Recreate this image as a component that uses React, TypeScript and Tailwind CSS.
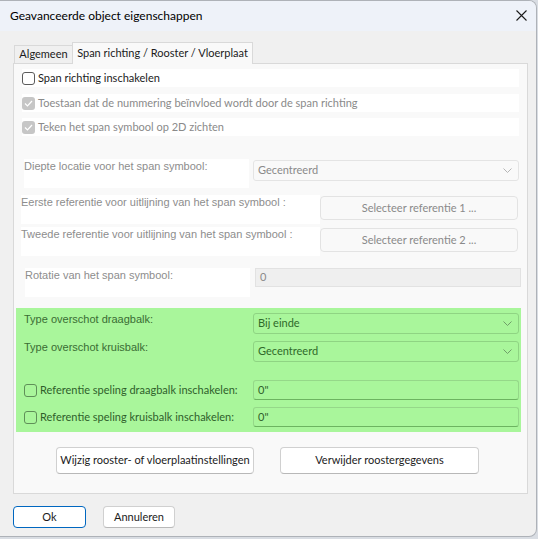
import React from "react";

const title = "font-['Lato','Noto_Sans',sans-serif] text-[12px]";
const ui = "font-['Lato','Noto_Sans',sans-serif] text-[11px] whitespace-nowrap";
const classic = "font-['Liberation_Sans',sans-serif] text-[11px] leading-[13px] whitespace-nowrap";

function Chevron({ className }: { className?: string }) {
  return (
    <svg width="9" height="5" viewBox="0 0 9 5" className={className}>
      <path d="M0.5 0.5 L4.5 4.5 L8.5 0.5" fill="none" stroke="currentColor" strokeWidth="1" />
    </svg>
  );
}

type BoxState = "off" | "disabledOn" | "greenOff";

function Checkbox({ state }: { state: BoxState }) {
  if (state === "disabledOn") {
    return (
      <span className="flex h-[13px] w-[13px] shrink-0 items-center justify-center rounded-[3px] bg-[#c6c6c6]">
        <svg width="9" height="7" viewBox="0 0 9 7">
          <path d="M1 3.5 L3.5 6 L8 1" fill="none" stroke="#ffffff" strokeWidth="1.2" />
        </svg>
      </span>
    );
  }
  if (state === "greenOff") {
    return <span className="h-[13px] w-[13px] shrink-0 rounded-[3px] border border-[#5f8f58] bg-[#a9f69b]" />;
  }
  return <span className="h-[13px] w-[13px] shrink-0 rounded-[3px] border border-[#5b5b5b] bg-white" />;
}

function CheckRow({ label, state, className }: { label: string; state: BoxState; className?: string }) {
  const disabled = state === "disabledOn";
  return (
    <div className={`ml-[8px] flex h-[18px] w-[497px] items-center gap-[3px] bg-white ${className ?? ""}`}>
      <Checkbox state={state} />
      <span className={`${ui} ${disabled ? "text-[#8a8a8a]" : "text-[#1b1b1b]"}`}>{label}</span>
    </div>
  );
}

function Combo({ value, green }: { value: string; green?: boolean }) {
  return (
    <div
      className={`flex h-[21px] w-[266px] items-center justify-between rounded-[3px] border pl-[4px] pr-[6px] ${ui} ${
        green
          ? "border-[#8fd483] bg-[#a9f69b] text-[#2f6a2a]"
          : "border-[#e4e4e4] bg-[#f9f9f9] text-[#8a8a8a]"
      }`}
    >
      <span>{value}</span>
      <Chevron className={green ? "text-[#6f9f68]" : "text-[#b5b5b5]"} />
    </div>
  );
}

function LabelBox({ text, className }: { text: string; className: string }) {
  return <div className={`h-[29px] shrink-0 bg-white pt-[1px] text-[#8d8d8d] ${classic} ${className}`}>{text}</div>;
}

function RefButton({ text }: { text: string }) {
  return (
    <div
      className={`mt-[1px] flex h-[24px] w-[198px] items-center justify-center rounded-[4px] border border-[#e3e3e3] bg-[#f9f9f9] text-[#8a8a8a] ${ui}`}
    >
      {text}
    </div>
  );
}

function GreenInput({ label }: { label: string }) {
  return (
    <div className="flex h-[20px] items-center">
      <div className="flex w-[237px] items-center gap-[3px] pl-[8px]">
        <Checkbox state="greenOff" />
        <span className={`${ui} text-[#2f5f2b]`}>{label}</span>
      </div>
      <div
        className={`flex h-[20px] w-[266px] items-center rounded-[3px] border border-[#95d889] border-b-[#6cb460] bg-[#a9f69b] pl-[4px] text-[#2f5f2b] ${ui}`}
      >
        0"
      </div>
    </div>
  );
}

function DialogButton({ text, className }: { text: string; className: string }) {
  return (
    <div
      className={`flex items-center justify-center rounded-[4px] border border-[#d0d0d0] border-b-[#b8b8b8] bg-white text-[#1b1b1b] ${ui} ${className}`}
    >
      {text}
    </div>
  );
}

export default function App() {
  return (
    <div className="h-[539px] w-[538px] bg-[#d9dde3]">
      <div className="flex h-[537px] w-[537px] flex-col overflow-hidden rounded-tr-[8px] rounded-br-[8px] border-t border-r border-b border-[#aeb2b8] bg-[#f0f0f0]">
        {/* title bar */}
        <div className="flex h-[30px] shrink-0 items-center justify-between bg-[#eef2f9] pl-[10px] pr-[9px]">
          <span className={`${title} text-black`}>Geavanceerde object eigenschappen</span>
          <svg width="11" height="11" viewBox="0 0 11 11" className="mt-[-2px]">
            <path d="M0.5 0.5 L10.5 10.5 M10.5 0.5 L0.5 10.5" stroke="#1b1b1b" strokeWidth="1.1" />
          </svg>
        </div>

        <div className="flex flex-col pl-[13px] pt-[11px]">
          {/* tabs */}
          <div className="relative z-10 flex h-[21px] items-end">
            <div className={`ml-[1px] flex h-[18px] w-[58px] items-center justify-center border-t border-l border-[#d9d9d9] bg-[#f0f0f0] text-[#1b1b1b] ${ui}`}>
              Algemeen
            </div>
            <div className={`mb-[-1px] flex h-[22px] w-[181px] items-center justify-center border-t border-r border-l border-[#d9d9d9] bg-[#f9f9f9] text-[#1b1b1b] ${ui}`}>
              Span richting / Rooster / Vloerplaat
            </div>
          </div>

          {/* tab page */}
          <div className="flex h-[431px] w-[515px] flex-col border border-[#d9d9d9] bg-[#f9f9f9]">
            <CheckRow className="mt-[5px]" state="off" label="Span richting inschakelen" />
            <CheckRow className="mt-[7px]" state="disabledOn" label="Toestaan dat de nummering beïnvloed wordt door de span richting" />
            <CheckRow className="mt-[6px]" state="disabledOn" label="Teken het span symbool op 2D zichten" />

            <div className="mt-[23px] flex items-start">
              <LabelBox className="ml-[10px] w-[225px]" text="Diepte locatie voor het span symbool:" />
              <div className="ml-[4px] mt-[1px]">
                <Combo value="Gecentreerd" />
              </div>
            </div>

            <div className="mt-[7px] flex items-start">
              <LabelBox className="ml-[7px] w-[299px]" text="Eerste referentie voor uitlijning van het span symbool :" />
              <RefButton text="Selecteer referentie 1 ..." />
            </div>

            <div className="mt-[3px] flex items-start">
              <LabelBox className="ml-[7px] w-[299px]" text="Tweede referentie voor uitlijning van het span symbool :" />
              <RefButton text="Selecteer referentie 2 ..." />
            </div>

            <div className="mt-[12px] flex items-start">
              <LabelBox className="ml-[11px] w-[225px]" text="Rotatie van het span symbool:" />
              <div className={`ml-[5px] flex h-[19px] w-[266px] items-center border border-[#e2e2e2] bg-[#efefef] pl-[4px] text-[#8a8a8a] ${ui}`}>
                0
              </div>
            </div>

            {/* overhang settings */}
            <div className="ml-[2px] mt-[11px] flex h-[124px] w-[505px] flex-col bg-[#a9f69b] pt-[5px]">
              <div className="flex h-[21px] items-start">
                <span className={`w-[237px] pl-[8px] text-[#3a6d34] ${classic}`}>Type overschot draagbalk:</span>
                <Combo value="Bij einde" green />
              </div>
              <div className="mt-[7px] flex h-[21px] items-start">
                <span className={`w-[237px] pl-[8px] text-[#3a6d34] ${classic}`}>Type overschot kruisbalk:</span>
                <Combo value="Gecentreerd" green />
              </div>
              <div className="mt-[18px]">
                <GreenInput label="Referentie speling draagbalk inschakelen:" />
              </div>
              <div className="mt-[7px]">
                <GreenInput label="Referentie speling kruisbalk inschakelen:" />
              </div>
            </div>

            <div className="mt-[15px] flex">
              <DialogButton className="ml-[42px] h-[27px] w-[198px]" text="Wijzig rooster- of vloerplaatinstellingen" />
              <DialogButton className="ml-[26px] h-[27px] w-[199px]" text="Verwijder roostergegevens" />
            </div>
          </div>

          {/* dialog buttons */}
          <div className="mt-[12px] flex">
            <div className={`flex h-[22px] w-[73px] items-center justify-center rounded-[4px] border border-[#0067c0] bg-white text-[#1b1b1b] ${ui}`}>
              Ok
            </div>
            <DialogButton className="ml-[17px] h-[22px] w-[72px]" text="Annuleren" />
          </div>
        </div>
      </div>
    </div>
  );
}
